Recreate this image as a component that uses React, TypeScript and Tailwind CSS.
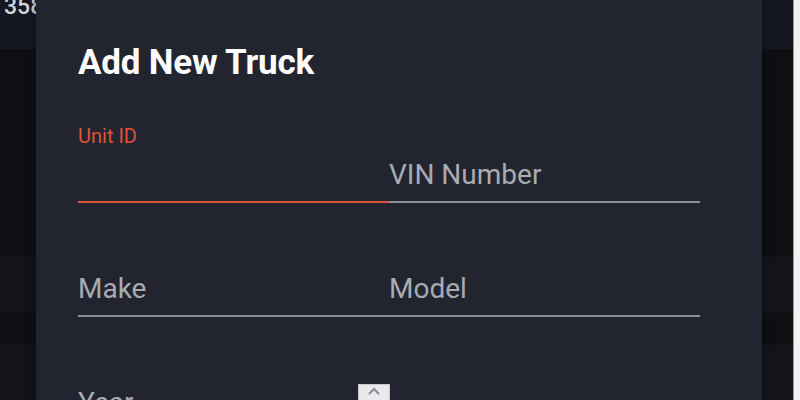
import React from "react";

export default function App() {
  return (
    <div
      className="relative w-[800px] h-[400px] overflow-hidden flex bg-[#0e0f13]"
      style={{ fontFamily: "Roboto, 'Liberation Sans', sans-serif" }}
    >
      {/* page behind the dialog */}
      <div className="flex-1 flex flex-col">
        <div className="h-[49px] bg-[#151722] px-[4px] text-[#d4d5da] text-[23px] leading-[14px] font-medium overflow-hidden">
          358
        </div>
        <div className="h-[208px] bg-[#0e0f13]" />
        <div className="h-[56px] bg-[#131419]" />
        <div className="h-[32px] bg-[#0e0f13]" />
        <div className="flex-1 bg-[#131419]" />
      </div>
      <div className="w-[7px] bg-[#f2f2f2] border-l border-[#9a9a9a]" />

      {/* dialog */}
      <div className="absolute left-[36px] top-[-20px] w-[726px] h-[440px] bg-[#22252f] shadow-[0_0_8px_rgba(0,0,0,0.5)] pl-[42px] pr-[62px] pt-[63px]">
        <h2 className="text-[35px] leading-[40px] font-bold text-white tracking-[-0.2px]">
          Add New Truck
        </h2>
        <div className="mt-[38px] grid grid-cols-2">
          {/* Unit ID - focused */}
          <div className="relative h-[82px] border-b-2 border-[#e0533a]">
            <span className="absolute left-0 top-[3px] text-[20px] leading-[24px] text-[#e0533a]">
              Unit ID
            </span>
          </div>
          <div className="relative h-[82px] border-b-2 border-[#8b8d95]">
            <span className="absolute left-0 top-[38px] text-[28px] leading-[32px] text-[#a9abb3]">
              VIN Number
            </span>
          </div>
          <div className="relative h-[114px] border-b-2 border-[#8b8d95]">
            <span className="absolute left-0 top-[70px] text-[28px] leading-[32px] text-[#a9abb3]">
              Make
            </span>
          </div>
          <div className="relative h-[114px] border-b-2 border-[#8b8d95]">
            <span className="absolute left-0 top-[70px] text-[28px] leading-[32px] text-[#a9abb3]">
              Model
            </span>
          </div>
          <div className="relative h-[114px]">
            <span className="absolute left-0 top-[70px] text-[28px] leading-[32px] text-[#a9abb3]">
              Year
            </span>
            <div className="absolute right-[-1px] top-[67px] w-[32px] h-[30px] bg-[#e9e9ed] border border-[#c8c8cc] flex items-start justify-center pt-[2px]">
              <svg width="14" height="9" viewBox="0 0 14 9" fill="none">
                <path d="M2 7 L7 2 L12 7" stroke="#8a8a90" strokeWidth="2" />
              </svg>
            </div>
          </div>
        </div>
      </div>
    </div>
  );
}
